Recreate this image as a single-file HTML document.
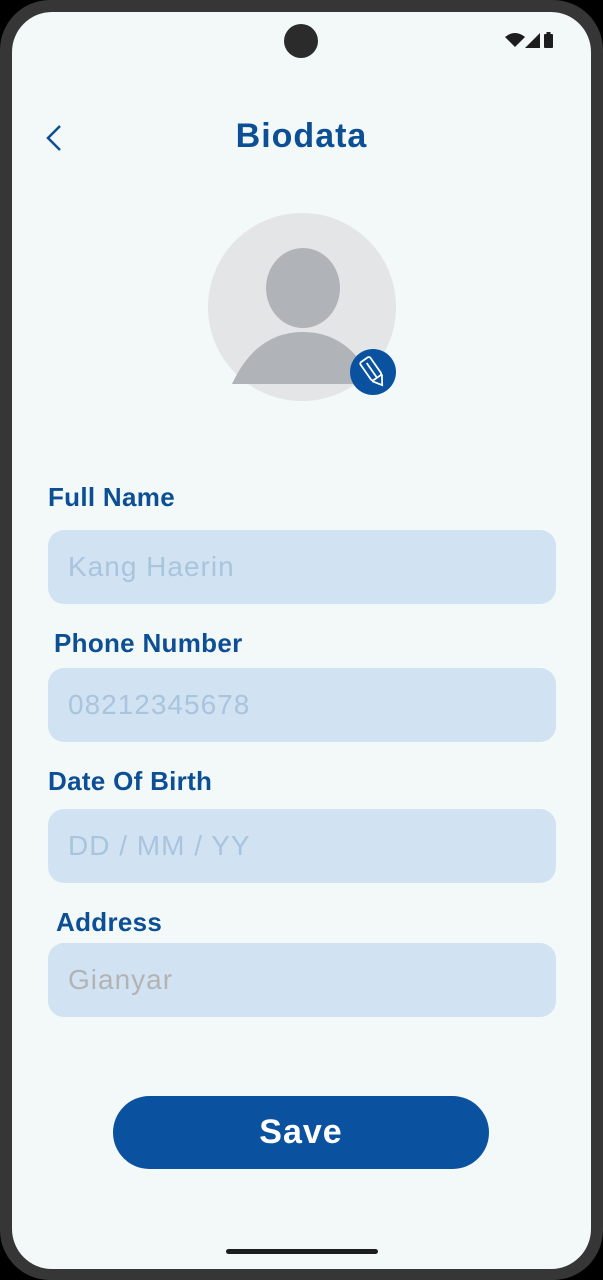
<!DOCTYPE html>
<html><head><meta charset="utf-8"><style>
*{margin:0;padding:0;box-sizing:border-box}
body{width:603px;height:1280px;background:#000;font-family:"Liberation Sans",sans-serif;position:relative;overflow:hidden}
.frame{position:absolute;left:0;top:0;width:603px;height:1280px;background:#363636;border-radius:50px}
.screen{position:absolute;left:12px;top:12px;width:579px;height:1257px;background:#f3f9f8;border-radius:40px;overflow:hidden}
.abs{position:absolute}
.lbl{position:absolute;color:#0d4f94;font-size:26px;font-weight:bold;letter-spacing:0.3px}
.fld{position:absolute;left:36px;width:508px;height:74px;background:#d1e3f2;border-radius:16px;color:#a9c4dd;font-size:28px;letter-spacing:1px;padding-left:20px;line-height:74px}
</style></head><body>
<div class="frame"></div>
<div class="screen">
 <div class="abs" style="left:272px;top:12px;width:34px;height:34px;border-radius:50%;background:#2b2b2b"></div>
 <svg class="abs" style="left:492px;top:18px" width="64" height="22" viewBox="0 0 64 22">
  <path d="M1 7 Q11 -1 21 7 L11 17 Z" fill="#1d1d1d"/>
  <path d="M21 18 L36 3 L36 18 Z" fill="#1d1d1d"/>
  <rect x="40" y="4" width="9" height="14" rx="1" fill="#1d1d1d"/><rect x="42.5" y="2" width="4" height="3" fill="#1d1d1d"/>
 </svg>
 <svg class="abs" style="left:30px;top:112px" width="24" height="30" viewBox="0 0 24 30"><path d="M18 2 L6 14 L18 26" stroke="#0d4f94" stroke-width="2.5" fill="none"/></svg>
 <div class="abs" style="left:0;width:579px;top:105px;text-align:center;color:#0d4f94;font-size:34px;font-weight:bold;letter-spacing:1px">Biodata</div>
 <svg class="abs" style="left:194px;top:200px" width="196" height="196" viewBox="0 0 196 196">
  <circle cx="96" cy="95" r="94" fill="#e4e5e7"/>
  <ellipse cx="97" cy="76" rx="37" ry="40" fill="#b0b4b8"/>
  <path d="M26 172 Q50 120 97 120 Q144 120 168 172 Z" fill="#b0b4b8"/>
  <circle cx="167" cy="160" r="23" fill="#0a52a0"/>
  <g transform="rotate(-35 167 160)" stroke="#fff" stroke-width="1.8" fill="none">
   <rect x="161" y="145" width="12" height="22" rx="2"/><path d="M161 167 L167 176 L173 167 M167 149 L167 167"/>
  </g>
 </svg>
 <div class="lbl" style="left:36px;top:470px">Full Name</div>
 <div class="fld" style="top:518px">Kang Haerin</div>
 <div class="lbl" style="left:42px;top:616px">Phone Number</div>
 <div class="fld" style="top:656px">08212345678</div>
 <div class="lbl" style="left:36px;top:754px">Date Of Birth</div>
 <div class="fld" style="top:797px">DD / MM / YY</div>
 <div class="lbl" style="left:44px;top:895px">Address</div>
 <div class="fld" style="top:931px;color:#b3b3b3">Gianyar</div>
 <div class="abs" style="left:101px;top:1084px;width:376px;height:73px;border-radius:37px;background:#0a52a0;color:#fff;font-size:34px;letter-spacing:1px;text-align:center;line-height:73px;font-weight:bold">Save</div>
 <div class="abs" style="left:214px;top:1237px;width:152px;height:5px;border-radius:3px;background:#1d1d1d"></div>
</div>
</body></html>
